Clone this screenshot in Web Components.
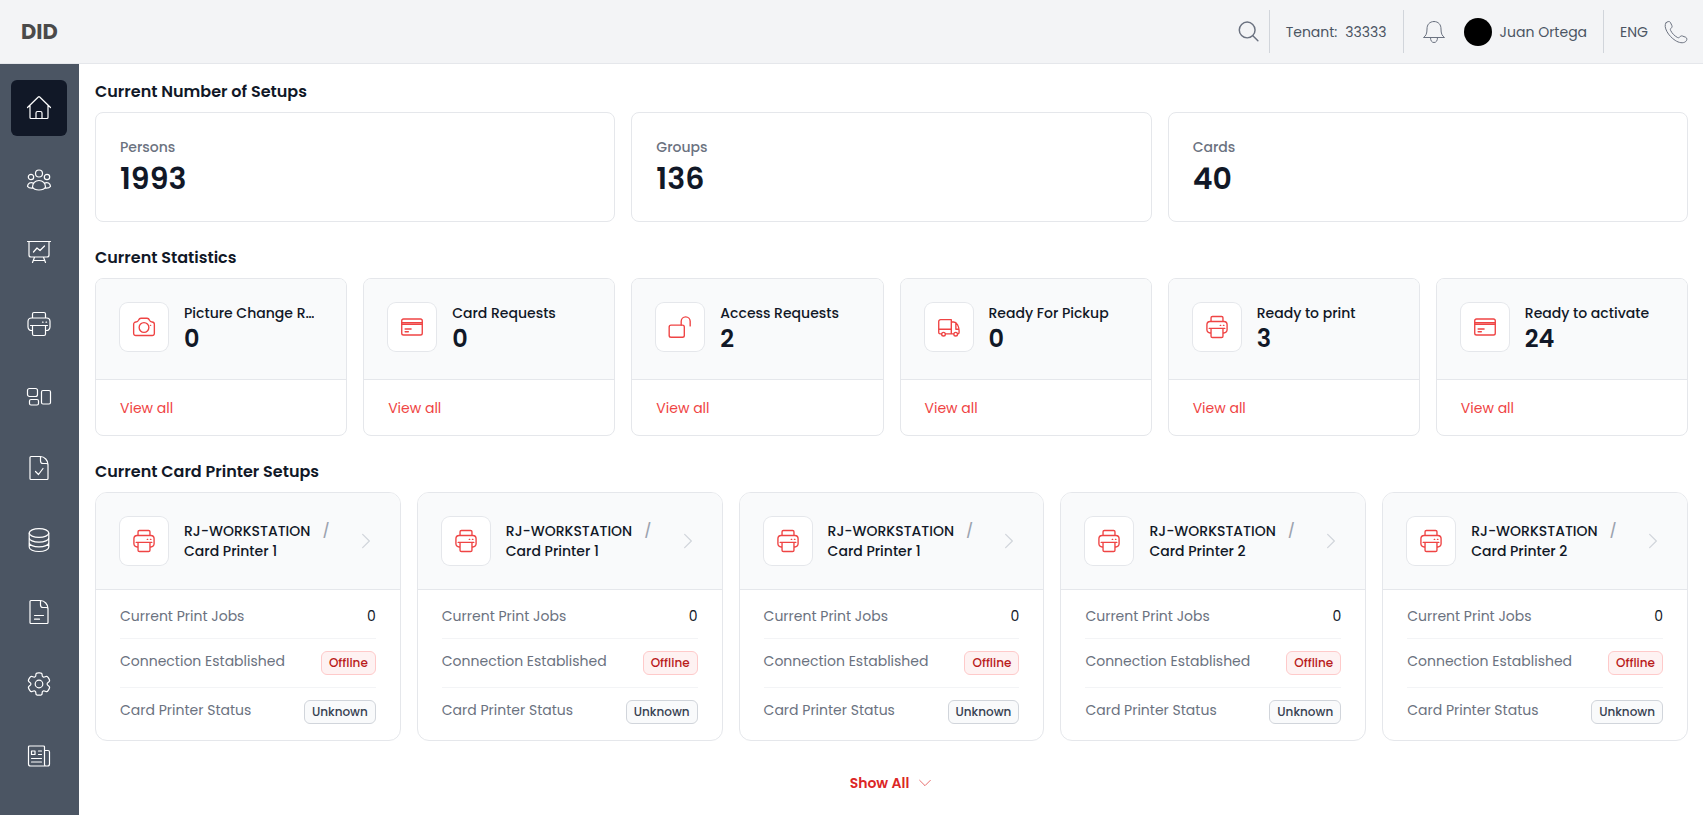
<!DOCTYPE html>
<html lang="en">
<head>
<meta charset="utf-8">
<meta name="viewport" content="width=device-width, initial-scale=1">
<title>DID – Dashboard</title>
<style>
  :root {
    --ink: #111827;
    --muted: #6b7280;
    --line: #e5e7eb;
    --soft: #f9fafb;
    --accent: #ef4444;
  }
  * { box-sizing: border-box; }
  body {
    margin: 0;
    color: var(--ink);
    background: #fff;
    font: 400 14px/20px Poppins, Inter, sans-serif;
  }
</style>
</head>
<body>
<app-shell>
  <app-header slot="header"></app-header>
  <side-nav slot="nav">
    <nav-item icon="home" label="Home" active></nav-item>
    <nav-item icon="users" label="Persons"></nav-item>
    <nav-item icon="board" label="Reports"></nav-item>
    <nav-item icon="printer" label="Printers"></nav-item>
    <nav-item icon="layout" label="Layouts"></nav-item>
    <nav-item icon="doccheck" label="Approvals"></nav-item>
    <nav-item icon="database" label="Data"></nav-item>
    <nav-item icon="doc" label="Documents"></nav-item>
    <nav-item icon="gear" label="Settings"></nav-item>
    <nav-item icon="news" label="News"></nav-item>
  </side-nav>

  <page-section columns="3">
    <span slot="title">Current Number of Setups</span>
    <count-card label="Persons">1993</count-card>
    <count-card label="Groups">136</count-card>
    <count-card label="Cards">40</count-card>
  </page-section>

  <page-section columns="6">
    <span slot="title">Current Statistics</span>
    <stat-card icon="camera" label="Picture Change R…">0</stat-card>
    <stat-card icon="card" label="Card Requests">0</stat-card>
    <stat-card icon="unlock" label="Access Requests">2</stat-card>
    <stat-card icon="truck" label="Ready For Pickup">0</stat-card>
    <stat-card icon="printer" label="Ready to print">3</stat-card>
    <stat-card icon="card" label="Ready to activate">24</stat-card>
  </page-section>

  <page-section columns="5">
    <span slot="title">Current Card Printer Setups</span>
    <printer-card host="RJ-WORKSTATION" printer="Card Printer 1"></printer-card>
    <printer-card host="RJ-WORKSTATION" printer="Card Printer 1"></printer-card>
    <printer-card host="RJ-WORKSTATION" printer="Card Printer 1"></printer-card>
    <printer-card host="RJ-WORKSTATION" printer="Card Printer 2"></printer-card>
    <printer-card host="RJ-WORKSTATION" printer="Card Printer 2"></printer-card>
  </page-section>

  <show-all>Show All</show-all>
</app-shell>

<script>
/* Gear outline: six teeth around the centre, corners softened with quadratic curves. */
function gearPath() {
  const points = [];
  for (let tooth = 0; tooth < 6; tooth++) {
    for (const [radius, offset] of [[8.2, -23], [11.6, -15], [11.6, 15], [8.2, 23]]) {
      const angle = (tooth * 60 + offset) * Math.PI / 180;
      points.push([12 + radius * Math.sin(angle), 12 - radius * Math.cos(angle)]);
    }
  }
  const mix = (a, b, t) => [a[0] + (b[0] - a[0]) * t, a[1] + (b[1] - a[1]) * t];
  return points.map((p, i) => {
    const before = points[(i + 23) % 24], after = points[(i + 1) % 24];
    return (i ? 'L' : 'M') + mix(p, before, .4) + 'Q' + p + ' ' + mix(p, after, .4);
  }).join('') + 'Z';
}

const ICONS = {
  home: '<path d="M.5 11.5 11.3 1a1 1 0 0 1 1.4 0L23.500 11.500M3 9.500V21.500a1 1 0 0 0 1 1H20a1 1 0 0 0 1-1V9.500M9 22.500V17a1.500 1.500 0 0 1 1.500-1.500h3A1.500 1.500 0 0 1 15 17v5.500"/>',
  users: '<circle cx="12" cy="5.500" r="3.500"/><circle cx="4" cy="9" r="2.700"/><circle cx="20" cy="9" r="2.700"/><path d="M12 12.500c4 0 6.500 3 6.500 6.500-1 2-3.500 3-6.500 3s-5.500-1-6.500-3c0-3.500 2.500-6.500 6.500-6.500ZM6.500 15.200C3.500 13.500.8 15.500.5 18.300c1 1.400 3.200 2 5.500 1.700M17.500 15.200c3-1.700 5.700.3 6 3.100-1 1.400-3.200 2-5.500 1.700"/>',
  board: '<path d="M.5 1.500h23M2 1.500V15a2 2 0 0 0 2 2h16a2 2 0 0 0 2-2V1.500M6.500 12l3.500-4 3 2.500 4.500-4.500M7.500 17.200 5.500 22.500M16.500 17.200l2 5.300M6.500 20.500h11"/>',
  printer: '<path d="M5.500 6V2A1.500 1.500 0 0 1 7 .5h10A1.500 1.500 0 0 1 18.500 2v4M5.500 18.500h-1a3.500 3.500 0 0 1-3.500-3.500v-5.500A3.500 3.500 0 0 1 4.500 6h15A3.500 3.500 0 0 1 23 9.500V15a3.500 3.500 0 0 1-3.500 3.500h-1M3.500 13.500h17M5.500 13.500h13V22a1.500 1.500 0 0 1-1.500 1.500H7A1.500 1.500 0 0 1 5.500 22ZM15.500 10.200h.6M19 10.200h.6"/>',
  layout: '<rect x=".5" y="4.500" width="10" height="8" rx="2"/><rect x="2.500" y="15.500" width="9" height="5.500" rx="1.500"/><rect x="14.500" y="6.500" width="9" height="13.500" rx="1.500"/>',
  doccheck: '<path d="M3 1.500a1 1 0 0 1 1-1h9.500c4 0 7.500 4 7.500 8v14a1 1 0 0 1-1 1H4a1 1 0 0 1-1-1ZM13.500.5v4.500a2.500 2.500 0 0 0 2.500 2.500h3.500c.8 0 1.500.4 1.500 1M8.500 15.500l3 3 4.500-6"/>',
  doc: '<path d="M3 1.500a1 1 0 0 1 1-1h9.500c4 0 7.500 4 7.500 8v14a1 1 0 0 1-1 1H4a1 1 0 0 1-1-1ZM13.500.5v4.500a2.500 2.500 0 0 0 2.500 2.500h3.500c.8 0 1.500.4 1.500 1M7.500 15.500h9M7.500 19.200h5"/>',
  database: '<ellipse cx="12" cy="5" rx="9.800" ry="4.400"/><path d="M2.200 5v14c0 2.500 4.300 4.500 9.800 4.500s9.800-2 9.800-4.500V5M2.200 9.700c0 2.500 4.300 4.500 9.800 4.500s9.800-2 9.800-4.500M2.200 14.400c0 2.500 4.300 4.500 9.800 4.500s9.800-2 9.800-4.500"/>',
  gear: '<circle cx="12" cy="12" r="3.800"/><path d="' + gearPath() + '"/>',
  news: '<path d="M17.500 20.500V3a1 1 0 0 0-1-1H2.500a1 1 0 0 0-1 1v17a2 2 0 0 0 2 2h17a2 2 0 0 0 2-2V8a1.500 1.500 0 0 0-1.500-1.500h-3.500M17.500 20.500c0 1 .8 1.500 1.500 1.500M4.500 7h3.500v3.500H4.500ZM11.500 7h3M11.500 10.500h3M4.500 14.500h10M4.500 18h10"/>',
  search: '<circle cx="10" cy="9.800" r="8.600"/><path d="m16.200 16 5.500 5.500"/>',
  bell: '<path d="M12 1.500c4.700 0 7 3.300 7 7.500 0 4.500 1 6.800 3.500 8.500h-21C4 15.800 5 13.500 5 9c0-4.200 2.300-7.500 7-7.500ZM8.500 17.800c0 3 1.300 4.700 3.500 4.700s3.500-1.700 3.500-4.700"/>',
  phone: '<path d="M2 2.800C3 1.500 5.500.9 6.400 2.400l1.500 3.200c.5 1.100-.1 2-.9 2.700-.8.600-.8 1.400-.3 2.300 1.500 2.900 3.800 5.200 6.600 6.800.9.500 1.700.5 2.400-.3.700-.9 1.600-1.500 2.700-1.100l3.400 1.300c1.700.8 1.200 3.300-.3 4.400-2.400 1.800-6.500 1.200-10.300-1.300-3.300-2.200-6.300-5.200-8.300-8.900C1 7.900.5 4.900 2 2.800Z"/>',
  camera: '<path d="M.7 9a2.500 2.500 0 0 1 2.500-2.500c1.700 0 2.300-.7 2.800-1.800C6.600 3.200 7.200 2.500 8.700 2.500h6.600c1.500 0 2.100.7 2.700 2.200.5 1.100 1.100 1.800 2.800 1.800A2.500 2.500 0 0 1 23.300 9v10a2.300 2.300 0 0 1-2.300 2.300H3A2.300 2.300 0 0 1 .7 19Z"/><circle cx="12" cy="12.500" r="5.300"/><path d="M19 10.200h.3"/>',
  card: '<rect x=".8" y="3.300" width="22.400" height="17.400" rx="2"/><path d="M1 7.200h22M1 9h22M4.500 14.200h6.500M4.500 17.200h3.500"/>',
  unlock: '<rect x=".2" y="10" width="16.500" height="13.200" rx="2"/><path d="M13.300 10V5.800a4.900 4.900 0 0 1 9.800 0v5"/>',
  truck: '<path d="M3.800 19.500H2.300a1.500 1.500 0 0 1-1.500-1.500V6a2 2 0 0 1 2-2H14.500v15.500H8.200M.8 14.500h13.700M14.500 6.500h2.500c3.500 0 6 5 6 9.500V18c0 1-.6 1.500-1.300 1.500M14.500 19.500H16.800M19.500 7.200v7.300H23"/><circle cx="6" cy="19.800" r="2"/><circle cx="19.300" cy="19.800" r="2"/>',
  right: '<path d="m8 4 8 8-8 8"/>',
  down: '<path d="m4 8 8 8 8-8"/>'
};

/* Base class: clones one cached template per element type into an open root. */
class Base extends HTMLElement {
  constructor() {
    super();
    const type = this.constructor;
    if (!Object.hasOwn(type, 'tpl')) {
      type.tpl = document.createElement('template');
      type.tpl.innerHTML = '<style>*{box-sizing:border-box}' + type.css + '</style>' + type.html;
    }
    this.attachShadow({ mode: 'open' }).append(type.tpl.content.cloneNode(true));
  }
  $(selector) { return this.shadowRoot.querySelector(selector); }
}

class UiIcon extends Base {
  static css = `
    :host { display: inline-block; flex: none; width: var(--icon-size, 24px); height: var(--icon-size, 24px); }
    svg { display: block; width: 100%; height: 100%; fill: none; stroke: currentColor;
      stroke-width: var(--icon-stroke, 1); stroke-linecap: round; stroke-linejoin: round; overflow: visible; }`;
  static html = '<svg viewBox="0 0 24 24" aria-hidden="true"></svg>';
  static observedAttributes = ['name'];
  attributeChangedCallback() { this.$('svg').innerHTML = ICONS[this.getAttribute('name')] || ''; }
}

class AppShell extends Base {
  static css = `
    :host { display: flex; flex-direction: column; min-height: 100vh; }
    .body { display: flex; flex: 1; }
    main { flex: 1; min-width: 0; display: flex; flex-direction: column; gap: 24px; padding: 16px 15px 12px 16px; }`;
  static html = '<slot name="header"></slot><div class="body"><slot name="nav"></slot><main><slot></slot></main></div>';
}

class AppHeader extends Base {
  static css = `
    :host { display: block; }
    header { display: flex; align-items: center; justify-content: space-between; height: 64px;
      padding: 0 15px 0 21px; background: #f3f4f6; border-bottom: 1px solid var(--line); color: #4b5563; }
    .logo { color: #4a4a4a; font-size: 21px; line-height: 28px; font-weight: 700; text-decoration: none; }
    .tools { display: flex; align-items: center; }
    .group { display: flex; align-items: center; height: 43px; padding: 0 16px; border-left: 1px solid #d1d5db; }
    .group:first-child { border: 0; padding: 0 9px 0 0; }
    .group:last-child { padding-right: 0; gap: 16px; }
    .tenant { gap: 8px; }
    .alerts { padding-left: 18px; }
    button { display: flex; align-items: center; margin: 0; padding: 0; border: 0; background: none;
      color: inherit; font: inherit; cursor: pointer; }
    ui-icon { color: var(--muted); }
    .search { --icon-size: 22px; --icon-stroke: 1.600; }
    .user { gap: 8px; margin-left: 18px; }
    .avatar { width: 28px; height: 28px; border-radius: 50%; background: #000; }`;
  static html = `
    <header>
      <a class="logo" href="#">DID</a>
      <div class="tools">
        <div class="group"><button aria-label="Search"><ui-icon class="search" name="search"></ui-icon></button></div>
        <div class="group tenant"><span>Tenant:</span><span>33333</span></div>
        <div class="group alerts">
          <button aria-label="Notifications"><ui-icon name="bell"></ui-icon></button>
          <button class="user"><span class="avatar"></span><span>Juan Ortega</span></button>
        </div>
        <div class="group"><button>ENG</button><button aria-label="Call"><ui-icon name="phone"></ui-icon></button></div>
      </div>
    </header>`;
}

class SideNav extends Base {
  static css = `
    :host { display: block; background: #4b5563; }
    nav { display: flex; flex-direction: column; gap: 16px; padding: 16px 12px 16px 11px; }`;
  static html = '<nav aria-label="Main"><slot></slot></nav>';
}

class NavItem extends Base {
  static css = `
    :host { display: block; --icon-stroke: 1.2; }
    a { display: grid; place-items: center; width: 56px; height: 56px; border-radius: 6px; color: #fff; }
    :host([active]) a { background: var(--ink); }`;
  static html = '<a href="#"><ui-icon></ui-icon></a>';
  connectedCallback() {
    this.$('ui-icon').setAttribute('name', this.getAttribute('icon'));
    this.$('a').setAttribute('aria-label', this.getAttribute('label'));
  }
}

class PageSection extends Base {
  static css = `
    :host { display: block; }
    h2 { margin: 0 0 8px; font-size: 16px; line-height: 24px; font-weight: 600; }
    .grid { display: grid; gap: 16px; grid-template-columns: repeat(var(--cols), minmax(0, 1fr)); }
    @media (max-width: 1200px) { .grid { grid-template-columns: repeat(auto-fill, minmax(280px, 1fr)); } }`;
  static html = '<section><h2><slot name="title"></slot></h2><div class="grid"><slot></slot></div></section>';
  connectedCallback() { this.style.setProperty('--cols', this.getAttribute('columns')); }
}

class CountCard extends Base {
  static css = `
    :host { display: flex; flex-direction: column; gap: 4px; padding: 24px; border: 1px solid var(--line);
      border-radius: 8px; background: #fff; }
    .label { color: var(--muted); font-weight: 500; }
    .value { font-size: 30px; line-height: 36px; font-weight: 600; }`;
  static html = '<div class="label"></div><div class="value"><slot></slot></div>';
  connectedCallback() { this.$('.label').textContent = this.getAttribute('label'); }
}

class IconTile extends Base {
  static css = `
    :host { display: grid; place-items: center; flex: none; width: 48px; height: 48px; border-radius: 8px;
      background: #fff; color: var(--accent); box-shadow: 0 0 0 1px var(--line); --icon-size: 22px; --icon-stroke: 1.5; }`;
  static html = '<ui-icon></ui-icon>';
  static observedAttributes = ['name'];
  attributeChangedCallback(attr, old, value) { this.$('ui-icon').setAttribute('name', value); }
}

class StatCard extends Base {
  static css = `
    :host { display: block; border: 1px solid var(--line); border-radius: 8px; background: #fff; overflow: hidden; }
    .top { display: flex; gap: 16px; padding: 24px; background: var(--soft); border-bottom: 1px solid var(--line); }
    .text { min-width: 0; }
    .label { overflow: hidden; white-space: nowrap; text-overflow: ellipsis; font-weight: 500; }
    .value { font-size: 24px; line-height: 32px; font-weight: 600; }
    .foot { display: flex; align-items: center; height: 55px; padding: 0 24px; }
    a { color: var(--accent); text-decoration: none; }`;
  static html = `
    <div class="top"><icon-tile></icon-tile>
      <div class="text"><div class="label"></div><div class="value"><slot></slot></div></div></div>
    <div class="foot"><a href="#">View all</a></div>`;
  connectedCallback() {
    this.$('icon-tile').setAttribute('name', this.getAttribute('icon'));
    this.$('.label').textContent = this.getAttribute('label');
  }
}

class StatusBadge extends Base {
  static css = `
    :host { display: block; padding: 3px 7px; border: 1px solid #d1d5db; border-radius: 6px; background: var(--soft);
      color: #374151; font-size: 12px; line-height: 16px; font-weight: 500; }
    :host([tone="danger"]) { border-color: #fecaca; background: #fef2f2; color: #b91c1c; }`;
  static html = '<slot></slot>';
}

class PrinterCard extends Base {
  static css = `
    :host { display: block; border: 1px solid var(--line); border-radius: 12px; background: #fff; overflow: hidden; }
    .top { display: flex; align-items: center; gap: 16px; padding: 24px; background: var(--soft);
      border-bottom: 1px solid var(--line); }
    .name { flex: 1; min-width: 0; font-weight: 500; }
    .sep { margin-left: 12px; color: #9ca3af; font-weight: 500; }
    .go { display: flex; color: #d1d5db; --icon-size: 20px; --icon-stroke: 1.5; }
    dl { margin: 0; padding: 4px 24px; }
    .row { display: flex; align-items: flex-start; justify-content: space-between; gap: 16px; padding: 12px 0; }
    .row + .row { border-top: 1px solid #f3f4f6; }
    dt { color: var(--muted); }
    dd { margin: 0; }`;
  static html = `
    <div class="top"><icon-tile name="printer"></icon-tile>
      <div class="name"><div><span class="host"></span><span class="sep">/</span></div><div class="printer"></div></div>
      <a class="go" href="#" aria-label="Open printer"><ui-icon name="right"></ui-icon></a></div>
    <dl>
      <div class="row"><dt>Current Print Jobs</dt><dd>0</dd></div>
      <div class="row"><dt>Connection Established</dt><dd><status-badge tone="danger">Offline</status-badge></dd></div>
      <div class="row"><dt>Card Printer Status</dt><dd><status-badge>Unknown</status-badge></dd></div>
    </dl>`;
  connectedCallback() {
    this.$('.host').textContent = this.getAttribute('host');
    this.$('.printer').textContent = this.getAttribute('printer');
  }
}

class ShowAll extends Base {
  static css = `
    :host { display: flex; justify-content: center; }
    button { display: flex; align-items: center; gap: 8px; height: 36px; padding: 0 8px; border: 0; background: none;
      color: #dc2626; font: inherit; font-weight: 600; cursor: pointer; }
    ui-icon { --icon-size: 16px; --icon-stroke: 1; }`;
  static html = '<button><slot></slot><ui-icon name="down"></ui-icon></button>';
}

customElements.define('ui-icon', UiIcon);
customElements.define('icon-tile', IconTile);
customElements.define('status-badge', StatusBadge);
customElements.define('app-shell', AppShell);
customElements.define('app-header', AppHeader);
customElements.define('side-nav', SideNav);
customElements.define('nav-item', NavItem);
customElements.define('page-section', PageSection);
customElements.define('count-card', CountCard);
customElements.define('stat-card', StatCard);
customElements.define('printer-card', PrinterCard);
customElements.define('show-all', ShowAll);
</script>
</body>
</html>
